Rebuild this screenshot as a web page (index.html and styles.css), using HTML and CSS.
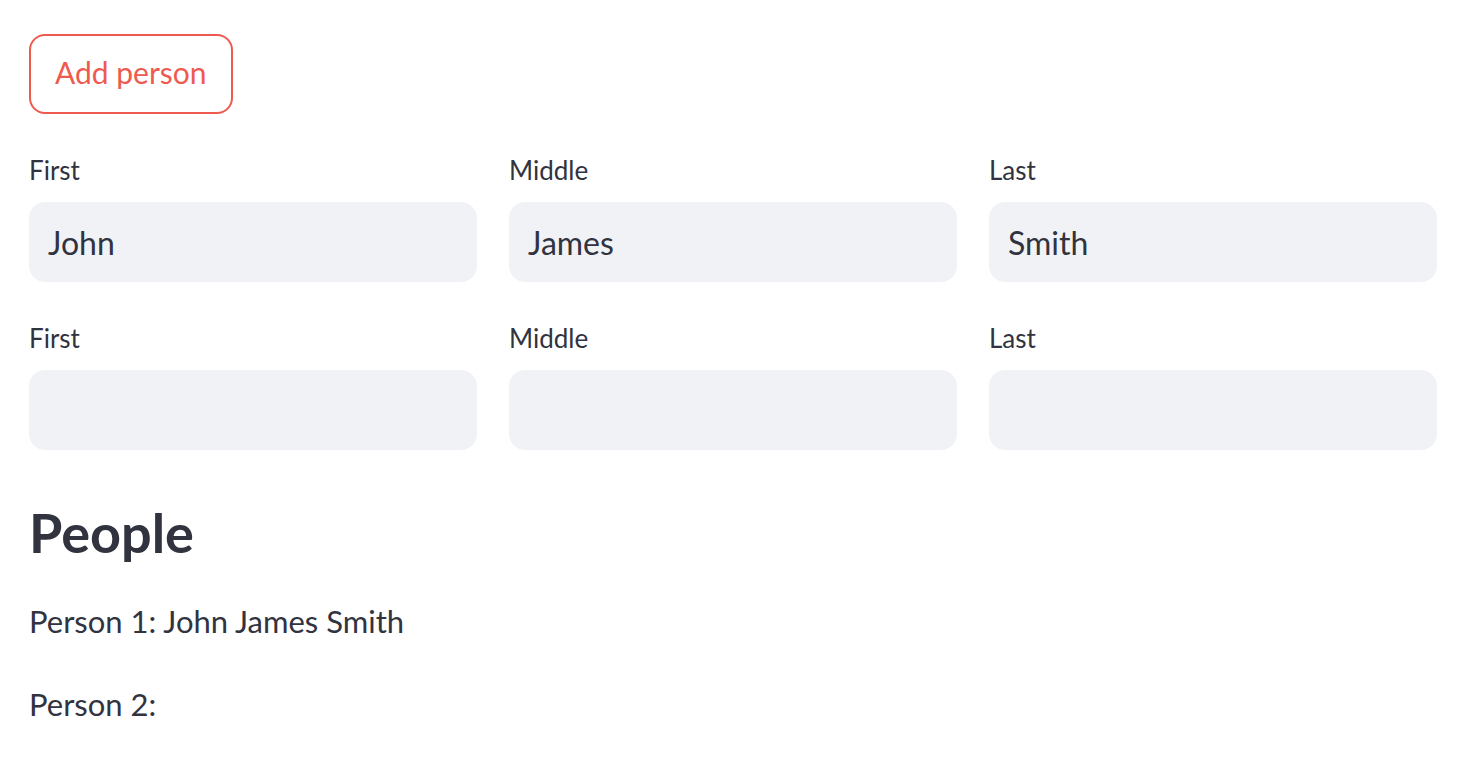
FILE: index.html
```html
<!DOCTYPE html>
<html>
<head>
<meta charset="utf-8">
<link rel="stylesheet" href="styles.css">
</head>
<body>
<main class="main">
  <div class="block">
    <button class="btn" type="button">Add person</button>
  </div>
  <div class="row">
    <div class="field"><label class="label">First</label><input class="input" value="John"></div>
    <div class="field"><label class="label">Middle</label><input class="input" value="James"></div>
    <div class="field"><label class="label">Last</label><input class="input" value="Smith"></div>
  </div>
  <div class="row">
    <div class="field"><label class="label">First</label><input class="input" value=""></div>
    <div class="field"><label class="label">Middle</label><input class="input" value=""></div>
    <div class="field"><label class="label">Last</label><input class="input" value=""></div>
  </div>
  <h3 class="heading">People</h3>
  <p class="text">Person 1: John James Smith</p>
  <p class="text">Person 2: </p>
</main>
</body>
</html>
```
FILE: styles.css
```css
html, body {
  margin: 0;
  padding: 0;
  background: #ffffff;
}
body {
  font-family: "Lato", "Open Sans", sans-serif;
  color: #31333f;
}
.main {
  width: 1408px;
  padding: 34px 0 0 29px;
  display: flex;
  flex-direction: column;
}
.block {
  display: flex;
}
.btn {
  height: 80px;
  padding: 0 24px 4px 24px;
  border: 2px solid #ef5a50;
  border-radius: 16px;
  background: #ffffff;
  color: #ef5a50;
  font-family: inherit;
  font-size: 30px;
  line-height: 1;
}
.row {
  display: grid;
  grid-template-columns: repeat(3, 1fr);
  column-gap: 32px;
  margin-top: 32px;
}
.field {
  display: flex;
  flex-direction: column;
}
.label {
  height: 48px;
  display: flex;
  align-items: center;
  font-size: 26px;
  margin-bottom: 8px;
  color: #31333f;
}
.input {
  height: 80px;
  box-sizing: border-box;
  border: 0;
  border-radius: 16px;
  background: #f0f2f6;
  padding: 0 19px;
  font-family: inherit;
  font-size: 32px;
  color: #31333f;
  outline: none;
}
.heading {
  margin: 49px 0 0 0;
  font-size: 54px;
  font-weight: 700;
  line-height: 68px;
  color: #31333f;
}
.text {
  margin: 28px 0 0 0;
  font-size: 31px;
  line-height: 52px;
}
.text + .text {
  margin-top: 31px;
}
```
